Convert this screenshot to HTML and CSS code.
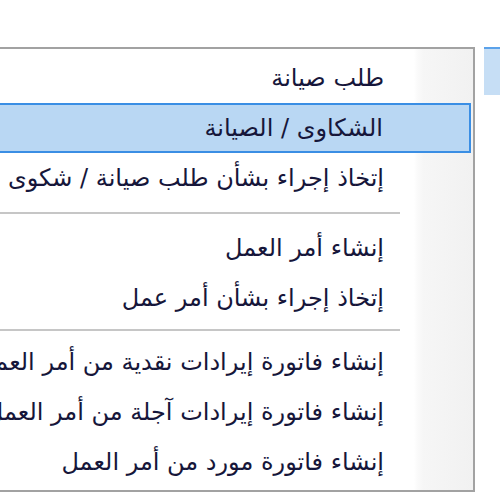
FILE: index.html
```html
<!DOCTYPE html>
<html lang="ar">
<head>
    <meta charset="UTF-8">
    <meta name="viewport" content="width=device-width, initial-scale=1.0">
    <title>قائمة الصيانة</title>
    <link rel="stylesheet" href="styles.css">
</head>
<body>
    <div class="stage">
        <div class="context-menu" dir="rtl">
            <div class="menu-item">طلب صيانة</div>
            <div class="menu-item active">الشكاوى / الصيانة</div>
            <div class="menu-item">إتخاذ إجراء بشأن طلب صيانة / شكوى</div>
            <div class="menu-sep first"></div>
            <div class="menu-item">إنشاء أمر العمل</div>
            <div class="menu-item">إتخاذ إجراء بشأن أمر عمل</div>
            <div class="menu-sep"></div>
            <div class="menu-item">إنشاء فاتورة إيرادات نقدية من أمر العمل</div>
            <div class="menu-item">إنشاء فاتورة إيرادات آجلة من أمر العمل</div>
            <div class="menu-item">إنشاء فاتورة مورد من أمر العمل</div>
        </div>
        <div class="side-tab"></div>
    </div>
</body>
</html>
```

FILE: styles.css
```css
body {
    margin: 0;
    background-color: #fff;
    font-family: "DejaVu Sans", Tahoma, sans-serif;
    overflow: hidden;
}
.stage {
    display: flex;
    justify-content: flex-end;
    align-items: flex-start;
    gap: 9px;
    width: 500px;
    padding-top: 47px;
}
.context-menu {
    flex-shrink: 0;
    width: 640px;
    border: 2px solid #a2a2a2;
    padding: 4px 2px 3px 2px;
    background: linear-gradient(to left, #f1f1f1 0, #f6f6f6 50px, #fbfbfb 56px, #fff 59px);
}
.menu-item {
    height: 50px;
    line-height: 48px;
    padding-right: 86px;
    font-size: 24px;
    color: #16163a;
    white-space: nowrap;
    border: 1px solid transparent;
    box-sizing: border-box;
}
.menu-item.active {
    background-color: #b9d7f3;
    border: 2px solid #3a8ee4;
    line-height: 46px;
}
.menu-sep {
    height: 2px;
    margin: 6px 71px 6px 0;
    background-color: #c6c6c6;
}
.menu-sep.first {
    margin: 9px 71px 9px 0;
}
.side-tab {
    flex-shrink: 0;
    width: 16px;
    height: 46px;
    background-color: #c6def5;
    border-top: 2px solid #5ba2ea;
}
```
